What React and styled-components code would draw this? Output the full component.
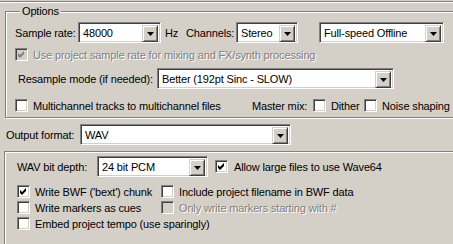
import React from 'react'
import styled, { createGlobalStyle } from 'styled-components'

const GlobalStyle = createGlobalStyle`
body {
  margin: 0;
  background: #d4d0c8;
  font-family: "Liberation Sans", Arial, sans-serif;
  font-size: 11px;
  letter-spacing: -0.15px;
  color: #000;
}
`

const Window = styled.div`
width: 453px;
height: 244px;
overflow: hidden;
background: #d4d0c8;
`

const TopEdge = styled.div`
margin-top: 1px;
height: 0;
border-top: 1px solid #808080;
border-bottom: 1px solid #fff;
`

const Group = styled.fieldset`
box-sizing: border-box;
margin: 2px 0 0 5px;
width: 470px;
height: 113px;
padding: 4px 0 0 9px;
border: 1px solid #808080;
box-shadow: inset 1px 1px 0 #fff, 1px 1px 0 #fff;
min-width: 0;
`

const Legend = styled.legend`
padding: 0 2px;
margin-left: 5px;
line-height: 13px;
background: #d4d0c8;
`

const Frame = styled.div`
box-sizing: border-box;
margin: 6px 0 0 4px;
width: 470px;
height: 160px;
padding: 4px 0 0 12px;
border: 1px solid #808080;
box-shadow: inset 1px 1px 0 #fff, 1px 1px 0 #fff;
`

const Row = styled.div`
display: flex;
align-items: center;
height: ${p => p.$h || 13}px;
margin-top: ${p => p.$mt || 0}px;
margin-left: ${p => p.$ml || 0}px;
`

const Label = styled.span`
flex: none;
white-space: nowrap;
width: ${p => (p.$w ? p.$w + 'px' : 'auto')};
margin-left: ${p => p.$ml || 0}px;
color: ${p => (p.$disabled ? '#808080' : '#000')};
text-shadow: ${p => (p.$disabled ? '1px 1px 0 #fff' : 'none')};
`

const Combo = styled.div`
flex: none;
box-sizing: border-box;
display: flex;
width: ${p => p.$w}px;
height: 21px;
margin-left: ${p => p.$ml || 0}px;
padding: 2px;
background: #fff;
border-top: 1px solid #808080;
border-left: 1px solid #808080;
border-bottom: 1px solid #fff;
border-right: 1px solid #fff;
box-shadow: inset 1px 1px 0 #404040, inset -1px -1px 0 #d4d0c8;
`

const ComboText = styled.span`
flex: 1;
padding-left: 2px;
line-height: 17px;
white-space: nowrap;
overflow: hidden;
`

const DropButton = styled.span`
flex: none;
box-sizing: border-box;
display: flex;
align-items: center;
justify-content: center;
width: 16px;
height: 17px;
background: #d4d0c8;
border-top: 1px solid #d4d0c8;
border-left: 1px solid #d4d0c8;
border-right: 1px solid #404040;
border-bottom: 1px solid #404040;
box-shadow: inset 1px 1px 0 #fff, inset -1px -1px 0 #808080;
`

const Box = styled.span`
flex: none;
box-sizing: border-box;
display: flex;
align-items: center;
justify-content: center;
width: 13px;
height: 13px;
margin-left: ${p => p.$ml || 0}px;
margin-right: ${p => p.$mr || 5}px;
background: ${p => (p.$disabled ? '#d4d0c8' : '#fff')};
border-top: 1px solid #808080;
border-left: 1px solid #808080;
border-bottom: 1px solid #fff;
border-right: 1px solid #fff;
box-shadow: inset 1px 1px 0 #404040, inset -1px -1px 0 #d4d0c8;
`

const CheckItem = styled.div`
flex: none;
display: flex;
align-items: center;
width: ${p => (p.$w ? p.$w + 'px' : 'auto')};
`

const Tick = ({ color }) => (
  <svg width="7" height="7" viewBox="0 0 7 7">
    <path d="M0 2 L2 4 L6 0 L6 3 L2 7 L0 5 Z" fill={color} />
  </svg>
)

const Arrow = () => (
  <svg width="7" height="4" viewBox="0 0 7 4">
    <path d="M0 0 H7 L3.5 4 Z" fill="#000" />
  </svg>
)

const Select = ({ w, ml, value }) => (
  <Combo $w={w} $ml={ml}>
    <ComboText>{value}</ComboText>
    <DropButton><Arrow /></DropButton>
  </Combo>
)

const Check = ({ checked, disabled, label, w, mr }) => (
  <CheckItem $w={w}>
    <Box $disabled={disabled} $mr={mr}>
      {checked && <Tick color={disabled ? '#808080' : '#000'} />}
    </Box>
    {label && <Label $disabled={disabled}>{label}</Label>}
  </CheckItem>
)

export default function App() {
  return (
    <Window>
      <GlobalStyle />
      <TopEdge />
      <Group>
        <Legend>Options</Legend>
        <Row $h={21}>
          <Label $w={63}>Sample rate:</Label>
          <Select w={83} value="48000" />
          <Label $w={21} $ml={4}>Hz</Label>
          <Label $w={50}>Channels:</Label>
          <Select w={62} value="Stereo" />
          <Select w={125} ml={21} value="Full-speed Offline" />
        </Row>
        <Row $mt={5}>
          <Check checked disabled label="Use project sample rate for mixing and FX/synth processing" />
        </Row>
        <Row $h={21} $mt={7}>
          <Label $w={139} $ml={3}>Resample mode (if needed):</Label>
          <Select w={237} value="Better (192pt Sinc - SLOW)" />
        </Row>
        <Row $mt={10}>
          <Check w={237} label="Multichannel tracks to multichannel files" />
          <Label $w={61}>Master mix:</Label>
          <Check w={51} label="Dither" />
          <Check label="Noise shaping" />
        </Row>
      </Group>
      <Row $h={21} $mt={6} $ml={6}>
        <Label $w={74}>Output format:</Label>
        <Select w={211} value="WAV" />
      </Row>
      <Frame>
        <Row $h={21}>
          <Label $w={80}>WAV bit depth:</Label>
          <Select w={111} value="24 bit PCM" />
          <Label $w={7} />
          <Check checked mr={6} label="Allow large files to use Wave64" />
        </Row>
        <Row $mt={8}>
          <Check checked w={144} label="Write BWF ('bext') chunk" />
          <Check label="Include project filename in BWF data" />
        </Row>
        <Row $mt={3}>
          <Check w={144} label="Write markers as cues" />
          <Check disabled label="Only write markers starting with #" />
        </Row>
        <Row $mt={3}>
          <Check label="Embed project tempo (use sparingly)" />
        </Row>
      </Frame>
    </Window>
  )
}
